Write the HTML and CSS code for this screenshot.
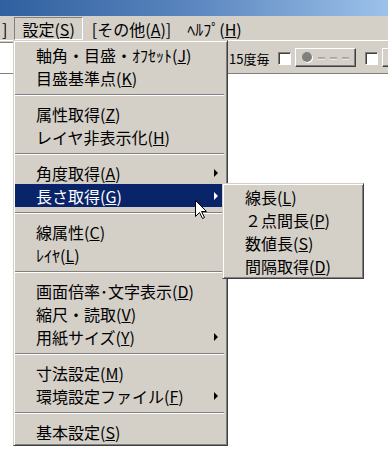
FILE: index.html
```html
<!DOCTYPE html>
<html lang="ja">
<head>
    <meta charset="UTF-8">
    <title>設定メニュー</title>
    <link rel="stylesheet" href="styles.css">
</head>
<body>
    <div class="window">
        <div class="titlebar"></div>

        <!-- Menu bar -->
        <div class="menubar">
            <span class="mb-item mb-edge">]</span>
            <span class="mb-item mb-open">設定(<u>S</u>)</span>
            <span class="mb-item mb-other">[その他(<u>A</u>)]</span>
            <span class="mb-item mb-help">ﾍﾙﾌﾟ(<u>H</u>)</span>
        </div>

        <!-- Tool bar under the menu -->
        <div class="toolbar">
            <div class="field"></div>
            <span class="tb-label">15度毎</span>
            <span class="check"></span>
            <span class="tb-button">
                <svg width="57" height="15" viewBox="0 0 57 15">
                    <circle cx="10" cy="8" r="5" fill="#ffffff"/>
                    <circle cx="9" cy="7" r="5" fill="#808080"/>
                    <path d="M20 9h7M32 9h7M44 9h7" stroke="#ffffff" stroke-width="1"/>
                    <path d="M20 8h7M32 8h7M44 8h7" stroke="#808080" stroke-width="1"/>
                </svg>
            </span>
            <span class="check"></span>
            <span class="tb-button"></span>
        </div>

        <div class="workspace"></div>
    </div>

    <!-- Drop-down menu -->
    <div class="menu dropdown">
        <div class="menu-item">軸角・目盛・ｵﾌｾｯﾄ(<u>J</u>)</div>
        <div class="menu-item">目盛基準点(<u>K</u>)</div>
        <div class="menu-sep"></div>
        <div class="menu-item">属性取得(<u>Z</u>)</div>
        <div class="menu-item">レイヤ非表示化(<u>H</u>)</div>
        <div class="menu-sep"></div>
        <div class="menu-item">角度取得(<u>A</u>)<span class="arrow"></span></div>
        <div class="menu-item active">長さ取得(<u>G</u>)<span class="arrow"></span></div>
        <div class="menu-sep"></div>
        <div class="menu-item">線属性(<u>C</u>)</div>
        <div class="menu-item">ﾚｲﾔ(<u>L</u>)</div>
        <div class="menu-sep"></div>
        <div class="menu-item">画面倍率･文字表示(<u>D</u>)</div>
        <div class="menu-item">縮尺・読取(<u>V</u>)</div>
        <div class="menu-item">用紙サイズ(<u>Y</u>)<span class="arrow"></span></div>
        <div class="menu-sep"></div>
        <div class="menu-item">寸法設定(<u>M</u>)</div>
        <div class="menu-item">環境設定ファイル(<u>F</u>)<span class="arrow"></span></div>
        <div class="menu-sep"></div>
        <div class="menu-item">基本設定(<u>S</u>)</div>
    </div>

    <!-- Sub menu of 長さ取得 -->
    <div class="menu submenu">
        <div class="menu-item">線長(<u>L</u>)</div>
        <div class="menu-item">２点間長(<u>P</u>)</div>
        <div class="menu-item">数値長(<u>S</u>)</div>
        <div class="menu-item">間隔取得(<u>D</u>)</div>
    </div>

    <!-- Mouse pointer -->
    <svg class="cursor" width="13" height="20" viewBox="0 0 13 20">
        <path d="M0.5 0.5V16.5L4.5 12.5L7.5 18.5L9.5 17.5L6.5 11.5H11.5Z" fill="#ffffff" stroke="#000000" stroke-width="1"/>
    </svg>
</body>
</html>
```

FILE: styles.css
```css
body, html {
    margin: 0;
    width: 388px;
    height: 452px;
    overflow: hidden;
}

body {
    position: relative;
    background-color: #d4d0c8;
    font-family: "Noto Sans CJK JP", sans-serif;
    font-size: 16px;
    color: #000000;
}

u {
    text-decoration: underline;
    text-underline-offset: 1px;
}

/* Window frame */
.window {
    display: flex;
    flex-direction: column;
    height: 100%;
}

.titlebar {
    height: 16px;
    background: linear-gradient(to right, #30609f, #5b86bf 50%, #9cc2ea);
}

/* Menu bar */
.menubar {
    display: flex;
    align-items: stretch;
    height: 23px;
    padding-top: 1px;
    background-color: #d4d0c8;
}

.mb-item {
    display: flex;
    align-items: center;
    line-height: 1;
    white-space: nowrap;
}

.mb-edge {
    margin-left: 2px;
}

.mb-open {
    margin-left: 7px;
    padding: 0 7px;
    border: 1px solid;
    border-color: #808080 #ffffff #ffffff #808080;
}

.mb-other {
    margin-left: 9px;
}

.mb-help {
    margin-left: 16px;
}

/* Tool bar */
.toolbar {
    display: flex;
    align-items: center;
    height: 32px;
    overflow: hidden;
    border-top: 1px solid #ffffff;
    border-bottom: 1px solid #808080;
    background-color: #d4d0c8;
}

.toolbar > * {
    flex-shrink: 0;
}

.field {
    align-self: stretch;
    width: 210px;
    margin-top: 1px;
    background-color: #ffffff;
    border-top: 1px solid #808080;
}

.tb-label {
    margin-left: 19px;
    margin-top: 3px;
    font-size: 13px;
    line-height: 1;
    white-space: nowrap;
}

.check {
    width: 11px;
    height: 11px;
    margin-top: 3px;
    margin-left: 9px;
    background-color: #ffffff;
    border: 1px solid;
    border-color: #808080 #ffffff #ffffff #808080;
    box-shadow: inset 1px 1px 0 #404040;
}

.check + .tb-button {
    margin-left: 4px;
}

.tb-button {
    display: flex;
    align-items: center;
    width: 61px;
    height: 19px;
    box-sizing: border-box;
    padding-left: 2px;
    border: 1px solid;
    border-color: #ffffff #404040 #404040 #ffffff;
    box-shadow: inset -1px -1px 0 #808080;
}

.workspace {
    flex: 1;
    background-color: #ffffff;
}

/* Pop-up menus */
.menu {
    position: absolute;
    box-sizing: border-box;
    background-color: #d4d0c8;
    border: 1px solid;
    border-color: #d4d0c8 #404040 #404040 #d4d0c8;
    box-shadow: inset 1px 1px 0 #ffffff, inset -1px -1px 0 #808080;
    white-space: nowrap;
}

.dropdown {
    left: 13px;
    top: 40px;
    width: 215px;
    padding: 2px 3px 2px 1px;
}

.submenu {
    left: 222px;
    top: 183px;
    width: 142px;
    padding: 1px 3px 1px 1px;
}

.menu-item {
    display: flex;
    align-items: center;
    height: 23px;
    padding: 0 6px 0 21px;
    line-height: 1;
}

.menu-item.active {
    background-color: #0a246a;
    color: #ffffff;
}

.arrow {
    margin-left: auto;
    width: 0;
    height: 0;
    border-left: 4px solid #000000;
    border-top: 4px solid transparent;
    border-bottom: 4px solid transparent;
}

.active .arrow {
    border-left-color: #ffffff;
}

.menu-sep {
    height: 0;
    margin: 5px 0 6px;
    border-top: 1px solid #808080;
    border-bottom: 1px solid #ffffff;
}

.cursor {
    position: absolute;
    left: 195px;
    top: 200px;
}
```
